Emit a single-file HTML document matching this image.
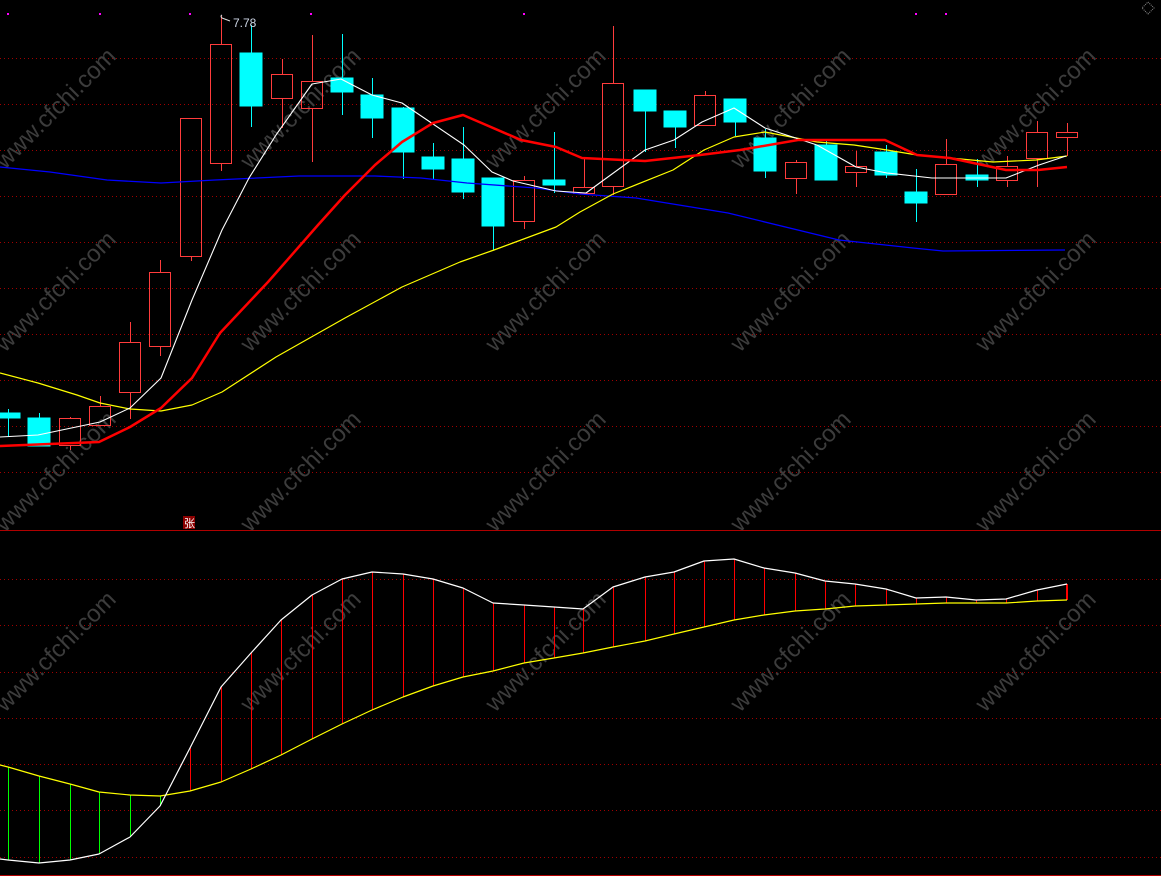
<!DOCTYPE html>
<html><head><meta charset="utf-8"><style>
html,body{margin:0;padding:0;background:#000;}
svg{display:block}
.wm{font-family:"Liberation Sans",sans-serif;font-size:24px;fill:#3c3c3c}
</style></head><body>
<svg width="1161" height="876" viewBox="0 0 1161 876" xmlns="http://www.w3.org/2000/svg">
<rect width="1161" height="876" fill="#000"/>
<g stroke="#a00000" stroke-width="1" stroke-dasharray="1,3" shape-rendering="crispEdges">
<line x1="0" y1="58.5" x2="1161" y2="58.5"/><line x1="0" y1="104.5" x2="1161" y2="104.5"/><line x1="0" y1="150.5" x2="1161" y2="150.5"/><line x1="0" y1="196.5" x2="1161" y2="196.5"/><line x1="0" y1="242.5" x2="1161" y2="242.5"/><line x1="0" y1="288.5" x2="1161" y2="288.5"/><line x1="0" y1="334.5" x2="1161" y2="334.5"/><line x1="0" y1="380.5" x2="1161" y2="380.5"/><line x1="0" y1="426.5" x2="1161" y2="426.5"/><line x1="0" y1="472.5" x2="1161" y2="472.5"/>
<line x1="0" y1="579.5" x2="1161" y2="579.5"/><line x1="0" y1="625.5" x2="1161" y2="625.5"/><line x1="0" y1="672.5" x2="1161" y2="672.5"/><line x1="0" y1="718.5" x2="1161" y2="718.5"/><line x1="0" y1="764.5" x2="1161" y2="764.5"/><line x1="0" y1="810.5" x2="1161" y2="810.5"/><line x1="0" y1="857.5" x2="1161" y2="857.5"/>
</g>
<g shape-rendering="crispEdges">
<line x1="0" y1="530.5" x2="1161" y2="530.5" stroke="#b00000"/>
<line x1="0" y1="875.5" x2="1161" y2="875.5" stroke="#b00000"/>
</g>
<g class="wm">
<text transform="translate(5,170) rotate(-45)">www.cfchi.com</text>
<text transform="translate(250,170) rotate(-45)">www.cfchi.com</text>
<text transform="translate(495,170) rotate(-45)">www.cfchi.com</text>
<text transform="translate(740,170) rotate(-45)">www.cfchi.com</text>
<text transform="translate(985,170) rotate(-45)">www.cfchi.com</text>
<text transform="translate(5,353) rotate(-45)">www.cfchi.com</text>
<text transform="translate(250,353) rotate(-45)">www.cfchi.com</text>
<text transform="translate(495,353) rotate(-45)">www.cfchi.com</text>
<text transform="translate(740,353) rotate(-45)">www.cfchi.com</text>
<text transform="translate(985,353) rotate(-45)">www.cfchi.com</text>
<text transform="translate(5,533) rotate(-45)">www.cfchi.com</text>
<text transform="translate(250,533) rotate(-45)">www.cfchi.com</text>
<text transform="translate(495,533) rotate(-45)">www.cfchi.com</text>
<text transform="translate(740,533) rotate(-45)">www.cfchi.com</text>
<text transform="translate(985,533) rotate(-45)">www.cfchi.com</text>
<text transform="translate(5,713) rotate(-45)">www.cfchi.com</text>
<text transform="translate(250,713) rotate(-45)">www.cfchi.com</text>
<text transform="translate(495,713) rotate(-45)">www.cfchi.com</text>
<text transform="translate(740,713) rotate(-45)">www.cfchi.com</text>
<text transform="translate(985,713) rotate(-45)">www.cfchi.com</text>
</g>
<g fill="#ff00ff">
<rect x="7" y="13" width="2" height="2"/><rect x="99" y="13" width="2" height="2"/><rect x="189" y="13" width="2" height="2"/><rect x="310" y="13" width="2" height="2"/><rect x="523" y="13" width="2" height="2"/><rect x="915" y="13" width="2" height="2"/><rect x="945" y="13" width="2" height="2"/>
</g>
<path d="M1148 2 L1154 8 L1148 14 L1142 8 Z" fill="none" stroke="#888" stroke-width="1" stroke-dasharray="1,1"/>
<g shape-rendering="crispEdges">
<g stroke="#00ffff" fill="#00ffff">
<line x1="8.5" y1="409" x2="8.5" y2="437"/><rect x="0" y="413" width="20" height="5"/>
<line x1="39.5" y1="413" x2="39.5" y2="446"/><rect x="28" y="418" width="22" height="28"/>
<line x1="251.5" y1="25" x2="251.5" y2="127"/><rect x="240" y="53" width="22" height="53"/>
<line x1="342.5" y1="34" x2="342.5" y2="115"/><rect x="331" y="78" width="22" height="14"/>
<line x1="372.5" y1="78" x2="372.5" y2="138"/><rect x="361" y="95" width="22" height="23"/>
<line x1="403.5" y1="107" x2="403.5" y2="179"/><rect x="392" y="108" width="22" height="44"/>
<line x1="433.5" y1="143" x2="433.5" y2="179"/><rect x="422" y="157" width="22" height="12"/>
<line x1="463.5" y1="127" x2="463.5" y2="199"/><rect x="452" y="159" width="22" height="33"/>
<line x1="493.5" y1="178" x2="493.5" y2="250"/><rect x="482" y="178" width="22" height="48"/>
<line x1="554.5" y1="132" x2="554.5" y2="193"/><rect x="543" y="180" width="22" height="5"/>
<line x1="645.5" y1="90" x2="645.5" y2="152"/><rect x="634" y="90" width="22" height="21"/>
<line x1="675.5" y1="111" x2="675.5" y2="148"/><rect x="664" y="111" width="22" height="16"/>
<line x1="735.5" y1="99" x2="735.5" y2="136"/><rect x="724" y="99" width="22" height="23"/>
<line x1="765.5" y1="129" x2="765.5" y2="178"/><rect x="754" y="138" width="22" height="33"/>
<line x1="826.5" y1="141" x2="826.5" y2="180"/><rect x="815" y="145" width="22" height="35"/>
<line x1="886.5" y1="145" x2="886.5" y2="178"/><rect x="875" y="152" width="22" height="23"/>
<line x1="916.5" y1="169" x2="916.5" y2="222"/><rect x="905" y="192" width="22" height="11"/>
<line x1="977.5" y1="159" x2="977.5" y2="187"/><rect x="966" y="175" width="22" height="5"/>
</g>
<g stroke="#ff3c3c" fill="none">
<line x1="70.5" y1="417" x2="70.5" y2="418"/><line x1="70.5" y1="446" x2="70.5" y2="450"/><rect x="59.5" y="418.5" width="21" height="27"/>
<line x1="100.5" y1="396" x2="100.5" y2="406"/><rect x="89.5" y="406.5" width="21" height="19"/>
<line x1="130.5" y1="322" x2="130.5" y2="342"/><line x1="130.5" y1="393" x2="130.5" y2="419"/><rect x="119.5" y="342.5" width="21" height="50"/>
<line x1="160.5" y1="260" x2="160.5" y2="272"/><line x1="160.5" y1="347" x2="160.5" y2="356"/><rect x="149.5" y="272.5" width="21" height="74"/>
<line x1="191.5" y1="257" x2="191.5" y2="261"/><rect x="180.5" y="118.5" width="21" height="138"/>
<line x1="221.5" y1="16" x2="221.5" y2="44"/><line x1="221.5" y1="164" x2="221.5" y2="171"/><rect x="210.5" y="44.5" width="21" height="119"/>
<line x1="282.5" y1="59" x2="282.5" y2="74"/><line x1="282.5" y1="99" x2="282.5" y2="128"/><rect x="271.5" y="74.5" width="21" height="24"/>
<line x1="312.5" y1="35" x2="312.5" y2="81"/><line x1="312.5" y1="109" x2="312.5" y2="162"/><rect x="301.5" y="81.5" width="21" height="27"/>
<line x1="524.5" y1="176" x2="524.5" y2="180"/><line x1="524.5" y1="222" x2="524.5" y2="229"/><rect x="513.5" y="180.5" width="21" height="41"/>
<line x1="584.5" y1="158" x2="584.5" y2="187"/><rect x="573.5" y="187.5" width="21" height="6"/>
<line x1="613.5" y1="26" x2="613.5" y2="83"/><line x1="613.5" y1="187" x2="613.5" y2="195"/><rect x="602.5" y="83.5" width="21" height="103"/>
<line x1="705.5" y1="91" x2="705.5" y2="95"/><rect x="694.5" y="95.5" width="21" height="30"/>
<line x1="796.5" y1="160" x2="796.5" y2="162"/><line x1="796.5" y1="179" x2="796.5" y2="194"/><rect x="785.5" y="162.5" width="21" height="16"/>
<line x1="856.5" y1="151" x2="856.5" y2="166"/><line x1="856.5" y1="173" x2="856.5" y2="187"/><rect x="845.5" y="166.5" width="21" height="6"/>
<line x1="946.5" y1="139" x2="946.5" y2="164"/><rect x="935.5" y="164.5" width="21" height="30"/>
<line x1="1007.5" y1="156" x2="1007.5" y2="166"/><line x1="1007.5" y1="181" x2="1007.5" y2="187"/><rect x="996.5" y="166.5" width="21" height="14"/>
<line x1="1037.5" y1="121" x2="1037.5" y2="132"/><line x1="1037.5" y1="159" x2="1037.5" y2="187"/><rect x="1026.5" y="132.5" width="21" height="26"/>
<line x1="1067.5" y1="123" x2="1067.5" y2="132"/><line x1="1067.5" y1="138" x2="1067.5" y2="156"/><rect x="1056.5" y="132.5" width="21" height="5"/>
</g>
</g>
<g fill="none" stroke-linejoin="round">
<polyline stroke="#0000ff" stroke-width="1.3" points="0,167 50,172 107,180 161,183 215,180 299,176 375,176 421,178 467,183 536,188 580,194 636,198 728,213 839,240 913,248 943,251 1065,250"/>
<polyline stroke="#ffff00" stroke-width="1.2" points="0,373 38,383 77,395 100,403 130,409 161,411 192,405 222,392 276,357 345,318 402,287 460,262 494,250 556,227 580,212 613,194 673,170 704,150 734,137 765,132 817,142 854,145 887,150 917,155 950,158 993,162 1036,160 1067,156"/>
<polyline stroke="#ffffff" stroke-width="1.1" points="0,437 38,435 100,422 130,408 161,378 192,300 222,230 249,178 276,135 312,84 341,79 372,95 402,103 433,124 464,145 492,172 513,181 556,191 586,193 601,182 645,150 674,140 702,122 734,108 765,128 817,145 856,167 887,173 932,178 1006,178 1039,165 1066,156"/>
<polyline stroke="#ff0000" stroke-width="2.5" points="0,446 99,442 130,427 161,408 192,378 220,333 268,282 318,225 345,195 375,165 402,142 433,123 463,115 521,140 556,147 582,158 645,161 700,155 740,150 798,140 885,140 917,155 950,158 1006,170 1038,170 1067,167"/>
</g>
<path d="M222 18 Q220 16 222 15 M222 18 L230 21" stroke="#ddd" stroke-width="1" fill="none"/>
<text x="233" y="27" font-family="Liberation Sans,sans-serif" font-size="12" fill="#d0d8e8">7.78</text>
<rect x="183" y="516" width="12" height="13" fill="#8b0000"/>
<text x="184" y="527" font-family="'Liberation Sans','Noto Sans CJK SC',sans-serif" font-size="11" fill="#fff">张</text>
<g stroke-width="1" shape-rendering="crispEdges">
<g stroke="#00ff00">
<line x1="8.5" y1="767" x2="8.5" y2="860"/><line x1="39.5" y1="776" x2="39.5" y2="863"/><line x1="70.5" y1="784" x2="70.5" y2="860"/><line x1="99.5" y1="792" x2="99.5" y2="854"/><line x1="130.5" y1="795" x2="130.5" y2="837"/><line x1="160.5" y1="796" x2="160.5" y2="806"/>
</g>
<g stroke="#ff0000">
<line x1="190.5" y1="748" x2="190.5" y2="791"/><line x1="221.5" y1="687" x2="221.5" y2="782"/><line x1="251.5" y1="653" x2="251.5" y2="769"/><line x1="281.5" y1="620" x2="281.5" y2="755"/><line x1="312.5" y1="595" x2="312.5" y2="739"/><line x1="342.5" y1="579" x2="342.5" y2="724"/><line x1="372.5" y1="572" x2="372.5" y2="710"/><line x1="403.5" y1="574" x2="403.5" y2="697"/><line x1="433.5" y1="579" x2="433.5" y2="686"/><line x1="463.5" y1="588" x2="463.5" y2="677"/><line x1="493.5" y1="603" x2="493.5" y2="671"/><line x1="524.5" y1="605" x2="524.5" y2="663"/><line x1="554.5" y1="607" x2="554.5" y2="658"/><line x1="583.5" y1="609" x2="583.5" y2="653"/><line x1="613.5" y1="587" x2="613.5" y2="647"/><line x1="645.5" y1="577" x2="645.5" y2="641"/><line x1="674.5" y1="572" x2="674.5" y2="634"/><line x1="704.5" y1="561" x2="704.5" y2="627"/><line x1="734.5" y1="559" x2="734.5" y2="620"/><line x1="764.5" y1="568" x2="764.5" y2="615"/><line x1="795.5" y1="573" x2="795.5" y2="611"/><line x1="825.5" y1="581" x2="825.5" y2="609"/><line x1="855.5" y1="584" x2="855.5" y2="606"/><line x1="886.5" y1="589" x2="886.5" y2="605"/><line x1="916.5" y1="598" x2="916.5" y2="604"/><line x1="946.5" y1="597" x2="946.5" y2="603"/><line x1="976.5" y1="600" x2="976.5" y2="603"/><line x1="1006.5" y1="599" x2="1006.5" y2="603"/><line x1="1037.5" y1="590" x2="1037.5" y2="601"/>
</g>
<line x1="1067" y1="584" x2="1067" y2="600" stroke="#ff0000" stroke-width="2"/>
</g>
<g fill="none" stroke-linejoin="round" stroke-width="1.2">
<polyline stroke="#ffff00" points="0,765 8,767 39,776 70,784 99,792 130,795 160,796 190,791 221,782 251,769 281,755 312,739 342,724 372,710 403,697 433,686 463,677 493,671 524,663 554,658 583,653 613,647 645,641 674,634 704,627 734,620 764,615 795,611 825,609 855,606 886,605 916,604 946,603 976,603 1006,603 1037,601 1067,600"/>
<polyline stroke="#ffffff" points="0,859 8,860 39,863 70,860 99,854 130,837 160,806 190,748 221,687 251,653 281,620 312,595 342,579 372,572 403,574 433,579 463,588 493,603 524,605 554,607 583,609 613,587 645,577 674,572 704,561 734,559 764,568 795,573 825,581 855,584 886,589 916,598 946,597 976,600 1006,599 1037,590 1067,584"/>
</g>
</svg>
</body></html>
